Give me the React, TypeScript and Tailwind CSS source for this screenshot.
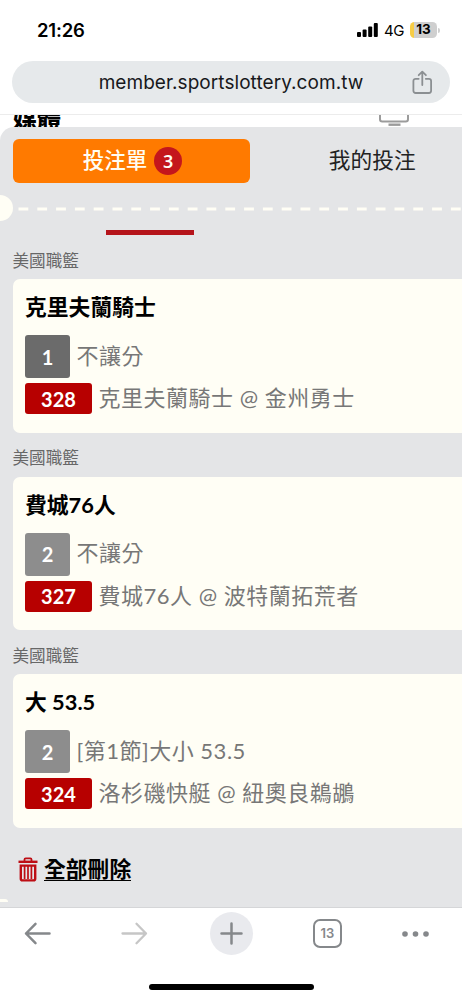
import React from "react";

type Bet = {
  id: number;
  league: string;
  title: string;
  pick: string;
  pickColor: string;
  market: string;
  code: string;
  match: string;
};

const bets: Bet[] = [
  { id: 1, league: "美國職籃", title: "克里夫蘭騎士", pick: "1", pickColor: "bg-[#6b6b6b]", market: "不讓分", code: "328", match: "克里夫蘭騎士 @ 金州勇士" },
  { id: 2, league: "美國職籃", title: "費城76人", pick: "2", pickColor: "bg-[#8d8d8d]", market: "不讓分", code: "327", match: "費城76人 @ 波特蘭拓荒者" },
  { id: 3, league: "美國職籃", title: "大 53.5", pick: "2", pickColor: "bg-[#8d8d8d]", market: "[第1節]大小 53.5", code: "324", match: "洛杉磯快艇 @ 紐奧良鵜鶘" },
];

function StatusBar() {
  return (
    <div className="flex h-[60px] shrink-0 items-center justify-between pl-[37px] pr-[22px] text-black">
      <span className="text-[18.5px] font-semibold leading-none tracking-[-0.2px]">21:26</span>
      <div className="flex items-center">
        <svg width="21" height="14" viewBox="0 0 21 14" fill="currentColor">
          <rect x="0" y="9" width="4" height="5" rx="1" />
          <rect x="5.6" y="6.5" width="4" height="7.5" rx="1" />
          <rect x="11.2" y="3.5" width="4" height="10.5" rx="1" />
          <rect x="16.8" y="0" width="4" height="14" rx="1" />
        </svg>
        <span className="ml-[6px] w-[20px] text-[15px] leading-none tracking-[-0.5px]">4G</span>
        <div className="ml-[6px] flex h-[16px] w-[27px] items-center justify-center rounded-[4.5px] bg-linear-to-r from-[#f7cd46] from-13% to-[#cfcfcf] to-13% text-[13.5px] font-bold leading-none">
          13
        </div>
        <div className="ml-px h-[5px] w-[2px] rounded-r bg-[#cfcfcf]" />
      </div>
    </div>
  );
}

function AddressBar() {
  return (
    <div className="flex h-[55px] shrink-0 items-start border-b border-[#ececec] px-3">
      <div className="relative mt-px flex h-[42px] w-full items-center justify-center rounded-full bg-[#e6e9eb]">
        <span className="text-[19px] leading-none tracking-[0.06px] text-[#17181c]">member.sportslottery.com.tw</span>
        <svg className="absolute right-[17px] top-[9px]" width="21" height="25" viewBox="0 0 21 25" fill="none" stroke="#8b8f92" strokeWidth="1.8" strokeLinecap="round" strokeLinejoin="round">
          <path d="M6.7 8.8H3.6a2.2 2.2 0 0 0-2.2 2.2v9.8A2.2 2.2 0 0 0 3.6 23h13.3a2.2 2.2 0 0 0 2.2-2.2V11a2.2 2.2 0 0 0-2.2-2.2h-3.1" />
          <path d="M10.3 15V2M6.7 5.2l3.6-3.6 3.6 3.6" />
        </svg>
      </div>
    </div>
  );
}

// bottom edge of the page behind the bet slip
function PageBehind() {
  return (
    <div className="flex h-[12px] shrink-0 items-start justify-between overflow-hidden bg-white pl-[13px] pr-[53px]">
      <span className="-mt-[8px] text-[24px] font-black leading-[24px] text-black">媒體</span>
      <svg width="30" height="12" viewBox="0 0 30 12" fill="none" stroke="#9b9b9b" strokeWidth="2">
        <path d="M1 0v4.2a2.3 2.3 0 0 0 2.3 2.3h23.4A2.3 2.3 0 0 0 29 4.2V0" />
        <path d="M9.5 9.7h12" strokeWidth="2.4" />
      </svg>
    </div>
  );
}

function Tabs() {
  return (
    <div className="flex h-[56px] shrink-0 pl-[12.5px] pt-[12px]">
      <div className="flex h-[44px] w-[237px] items-center justify-center rounded-[6px] bg-[#ff7a00] pl-[3px] text-[21.5px] font-medium text-[#fffdf4]">
        <span className="leading-none">投注單</span>
        <span className="ml-[7px] flex h-[28px] w-[28px] items-center justify-center rounded-full bg-[#c4161c] font-['Noto_Sans','Noto_Sans_CJK_TC',sans-serif] text-[18px] font-semibold leading-none">3</span>
      </div>
      <div className="flex h-[44px] flex-1 items-center justify-center pl-[33px] text-[21.7px] leading-none text-[#222]">
        我的投注
      </div>
    </div>
  );
}

function TicketEdge() {
  return (
    <div className="flex h-[64px] shrink-0 flex-col">
      <div className="mt-[12px] flex h-[26px] items-center">
        <div className="h-[26px] w-[13px] shrink-0 rounded-r-full bg-[#fffef5]" />
        <svg className="mt-[2px]" width="449" height="4" viewBox="0 0 449 4">
          <path d="M5.5 2H449" stroke="#fffef5" strokeWidth="3.2" strokeDasharray="9.8 9" />
        </svg>
      </div>
      <div className="ml-[106px] mt-[9px] h-[5px] w-[88px] bg-[#b5141b]" />
    </div>
  );
}

function BetItem({ bet }: { bet: Bet }) {
  return (
    <div className="h-[197.7px] shrink-0 pl-[12.5px]">
      <div className="flex h-[36px] items-center text-[16.6px] leading-none text-[#676767]">{bet.league}</div>
      <div className="flex h-[153.5px] flex-col rounded-l-[7px] bg-[#fffef5] pl-[12.5px] pt-[12px]">
        <h2 className="flex h-[32px] items-center text-[21.8px] font-bold leading-none text-black">{bet.title}</h2>
        <div className="mt-[12px] flex items-center">
          <span className={`flex h-[43px] w-[45px] items-center justify-center rounded-[3px] text-[20px] font-bold leading-none text-white ${bet.pickColor}`}>
            {bet.pick}
          </span>
          <span className="-mt-[2px] ml-[6.5px] whitespace-nowrap text-[22px] leading-none tracking-[0.5px] text-[#777]">{bet.market}</span>
        </div>
        <div className="mt-[5px] flex items-center">
          <span className="flex h-[31px] w-[67px] items-center justify-center rounded-[3px] bg-[#b70000] text-[20px] font-bold leading-none text-white">
            {bet.code}
          </span>
          <span className="-mt-px ml-[6.5px] whitespace-nowrap text-[22px] leading-none tracking-[0.5px] text-[#777]">{bet.match}</span>
        </div>
      </div>
    </div>
  );
}

function DeleteAll() {
  return (
    <div className="flex items-center pl-[18px] pt-[21px]">
      <svg width="20" height="25" viewBox="0 0 20 25" fill="none" stroke="#bd0d14">
        <path d="M6.5 4V2.6Q6.5 1.4 7.700 1.4h4.6q1.2 0 1.2 1.2V4" strokeWidth="1.8" />
        <path d="M.5 4.8h19" strokeWidth="2.4" />
        <path d="M2.8 8.600h14.400v13.200q0 1.600-1.600 1.600H4.400q-1.600 0-1.600-1.600z" strokeWidth="2.400" />
        <path d="M6.600 9v13M10 9v13M13.400 9v13" strokeWidth="1.700" />
      </svg>
      <span className="ml-[6px] border-b-[1.5px] border-black text-[21.8px] font-bold leading-[22px] text-black">全部刪除</span>
    </div>
  );
}

function BrowserToolbar() {
  return (
    <div className="flex h-[93px] shrink-0 flex-col items-center border-t border-[#d5d6d8] bg-white">
      <div className="flex h-[51px] w-full items-center pl-[24px] text-[#85888b]">
        <svg width="27" height="23" viewBox="0 0 27 23" fill="none" stroke="currentColor" strokeWidth="2.5" strokeLinecap="round" strokeLinejoin="round">
          <path d="M25.5 11.5H2M11.5 1.8 2 11.5l9.5 9.7" />
        </svg>
        <svg className="ml-[70px]" width="27" height="23" viewBox="0 0 27 23" fill="none" stroke="#c6c6c6" strokeWidth="2.3" strokeLinecap="round" strokeLinejoin="round">
          <path d="M1.5 11.5H25M15.5 1.8 25 11.5l-9.5 9.7" />
        </svg>
        <div className="ml-[62px] flex h-[43px] w-[43px] items-center justify-center rounded-full bg-[#e9eaee]">
          <svg width="23" height="23" viewBox="0 0 23 23" fill="none" stroke="currentColor" strokeWidth="2.5" strokeLinecap="round">
            <path d="M11.5 1.5v20M1.5 11.5h20" />
          </svg>
        </div>
        <div className="ml-[60px] flex h-[29px] w-[29px] items-center justify-center rounded-[7px] border-[2.5px] border-[#85888b] text-[13px] font-semibold leading-none">13</div>
        <svg className="ml-[60px]" width="27" height="6" viewBox="0 0 27 6" fill="currentColor">
          <circle cx="3" cy="3" r="2.8" />
          <circle cx="13.5" cy="3" r="2.8" />
          <circle cx="24" cy="3" r="2.8" />
        </svg>
      </div>
      <div className="mt-[25px] h-[6px] w-[165px] rounded-full bg-black" />
    </div>
  );
}

export default function App() {
  return (
    <div className="flex h-[1000px] w-[462px] flex-col overflow-hidden bg-white font-['Inter','Noto_Sans_CJK_TC',sans-serif]">
      <StatusBar />
      <AddressBar />
      <PageBehind />
      <main className="relative flex min-h-0 flex-1 flex-col overflow-hidden rounded-tl-[14px] bg-[#e4e5e7] font-['Lato','Noto_Sans_CJK_TC',sans-serif]">
        <Tabs />
        <TicketEdge />
        <div className="-mt-[4px] flex shrink-0 flex-col">
          {bets.map(bet => (
            <BetItem key={bet.id} bet={bet} />
          ))}
        </div>
        <DeleteAll />
        {/* sliver of the next ticket notch */}
        <div className="absolute bottom-[5px] left-0 h-[3px] w-[8px] rounded-tr-full bg-[#fffef5]" />
      </main>
      <BrowserToolbar />
    </div>
  );
}
